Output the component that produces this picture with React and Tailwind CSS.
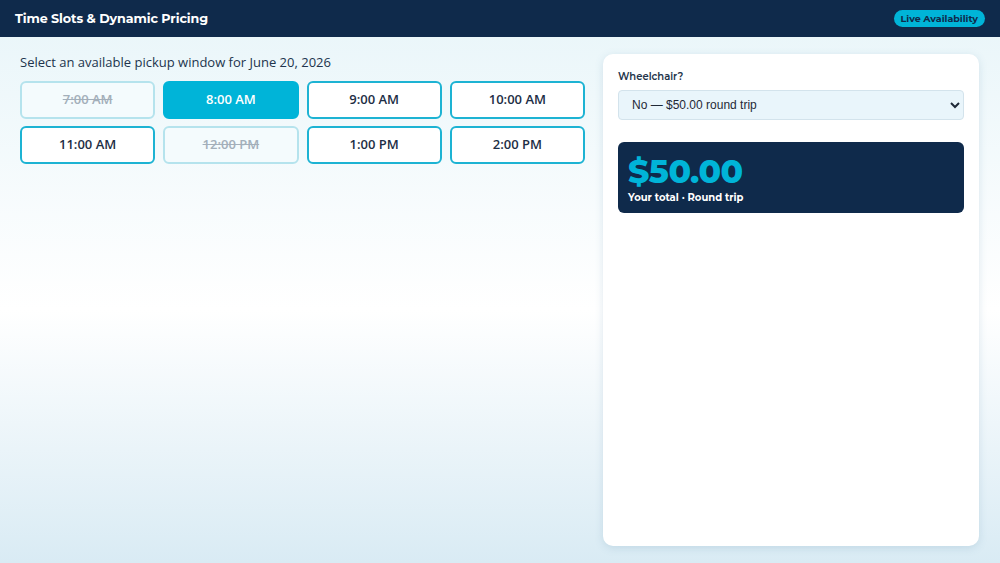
import React, { useState } from "react";

const SLOTS = [
  { label: "7:00 AM", disabled: true },
  { label: "8:00 AM" },
  { label: "9:00 AM" },
  { label: "10:00 AM" },
  { label: "11:00 AM" },
  { label: "12:00 PM", disabled: true },
  { label: "1:00 PM" },
  { label: "2:00 PM" },
];

export default function App() {
  const [selected, setSelected] = useState("8:00 AM");
  const [wheelchair, setWheelchair] = useState("no");

  return (
    <div className="flex h-screen flex-col overflow-hidden bg-[linear-gradient(180deg,#e8f5f9_0%,#ffffff_55%,#d9ebf4_100%)] font-['Open_Sans','Noto_Sans',sans-serif]">
      <header className="flex h-[37px] shrink-0 items-center justify-between bg-[#0f2a4b] px-[15px] font-['Montserrat','Inter',sans-serif]">
        <h1 className="text-[12.7px] font-bold tracking-[-0.1px] text-white">
          Time Slots &amp; Dynamic Pricing
        </h1>
        <span className="rounded-full bg-[#00b4d8] px-[7px] py-[2px] text-[9.5px] font-bold leading-[13px] text-[#0f2a4b]">
          Live Availability
        </span>
      </header>

      <main className="grid min-h-0 flex-1 grid-cols-[565px_376px] gap-[18px] pb-[17px] pl-[20px] pt-[17px]">
        <section>
          <p className="-mt-[1px] mb-[10px] text-[13px] font-medium leading-[18px] text-[#21344d]">
            Select an available pickup window for June 20, 2026
          </p>
          <div className="grid grid-cols-4 gap-x-[8px] gap-y-[7px]">
            {SLOTS.map((s) => {
              const active = selected === s.label;
              const cls = s.disabled
                ? "border-[#b5e3ed] bg-[#f4fbfd] text-[#a3afba] line-through cursor-not-allowed"
                : active
                ? "border-[#00b4d8] bg-[#00b4d8] text-white"
                : "border-[#1db3d3] bg-white text-[#1d2e45]";
              return (
                <button
                  key={s.label}
                  disabled={s.disabled}
                  onClick={() => setSelected(s.label)}
                  className={`h-[38px] rounded-[6px] border-2 font-['Open_Sans',sans-serif] text-[13px] font-semibold transition-colors ${cls}`}
                >
                  {s.label}
                </button>
              );
            })}
          </div>
        </section>

        <aside className="rounded-[10px] bg-white px-[15px] pt-[16px] shadow-[0_2px_8px_rgba(80,130,160,0.18)]">
          <label className="block font-['Montserrat','Inter',sans-serif] text-[10px] font-semibold leading-[14px] text-[#23344a]">
            Wheelchair?
          </label>
          <select
            value={wheelchair}
            onChange={(e) => setWheelchair(e.target.value)}
            className="mt-[6px] h-[30px] w-full rounded-[4px] border border-[#d3e3ec] bg-[#e9f5fb] px-[9px] font-['Liberation_Sans',Arial,sans-serif] text-[12px] text-[#1f2937]"
          >
            <option value="no">No — $50.00 round trip</option>
            <option value="yes">Yes — $75.00 round trip</option>
          </select>

          <div className="mt-[22px] h-[71px] rounded-[6px] bg-[#0f2a4b] px-[10px] pt-[10px] font-['Montserrat','Inter',sans-serif]">
            <div className="text-[33px] font-extrabold leading-[38px] tracking-[-0.5px] text-[#00b4d8]">
              {wheelchair === "no" ? "$50.00" : "$75.00"}
            </div>
            <div className="mt-[1px] text-[10px] font-bold leading-[13px] text-white">
              Your total · Round trip
            </div>
          </div>
        </aside>
      </main>
    </div>
  );
}
